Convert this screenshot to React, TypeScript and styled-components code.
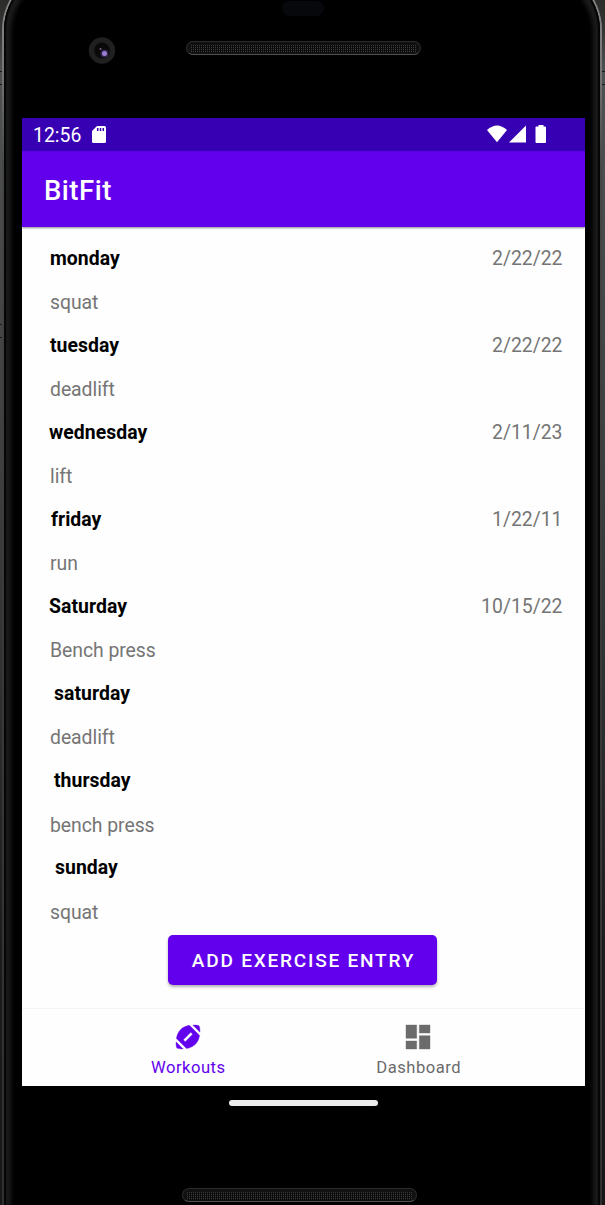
import React from "react";
import styled, { createGlobalStyle } from "styled-components";

const GlobalStyle = createGlobalStyle`
  * { box-sizing: border-box; }
  body { margin: 0; background: #000; overflow: hidden; }
`;

const Stage = styled.div`
  position: relative;
  width: 605px;
  height: 1205px;
  overflow: hidden;
  background: linear-gradient(#2c2c2a, #343432 30px, #505252 70px, #3c3e3d 500px, #1c1c1c 950px, #171717);
  font-family: Roboto, sans-serif;
`;

const Rim = styled.div`
  position: absolute;
  top: -32px;
  bottom: 0;
  left: 2px;
  right: 3px;
  padding: 2px 2px 0;
  border-radius: 62px 62px 0 0;
  background: linear-gradient(#8c8c8c 0, #777 100px, #454746 200px, #383938 700px, #303030);
`;

const Bezel = styled.div`
  width: 100%;
  height: 100%;
  border-radius: 60px 60px 0 0;
  background: #000;
  box-shadow: inset 2px 0 1px #050505, inset -2px 0 1px #050505,
    inset 7px 3px 4px #1b1b1b, inset -7px 3px 4px #1b1b1b;
`;

const SideKey = styled.div<{ $side: "left" | "right"; $top: number; $height: number }>`
  position: absolute;
  ${(p) => p.$side}: 0;
  top: ${(p) => p.$top}px;
  width: 4px;
  height: ${(p) => p.$height}px;
  border: solid #171717;
  border-width: 1px 0;
`;

const Device = styled.div`
  position: relative;
  height: 1205px;
  padding: 0 20px 0 22px;
  display: flex;
  flex-direction: column;
`;

const TopBezel = styled.div`
  position: relative;
  height: 118px;
  flex: none;
`;

const Notch = styled.div`
  position: absolute;
  left: 260px;
  top: 1px;
  width: 42px;
  height: 15px;
  border-radius: 8px;
  background: #07080c;
`;

const Camera = styled.svg`
  position: absolute;
  left: 66px;
  top: 36px;
`;

const Speaker = styled.div<{ $left: number; $top: number }>`
  position: absolute;
  left: ${(p) => p.$left}px;
  top: ${(p) => p.$top}px;
  width: 235px;
  height: 14px;
  border: 1px solid #2b2c2b;
  border-bottom-color: #505150;
  border-radius: 7px;
  background:
    repeating-linear-gradient(90deg, transparent 0 1px, #0b0b0b 1px 2px) 4px 3px / 225px 8px no-repeat,
    repeating-linear-gradient(#3a3a38 0 1px, #151515 1px 2px) 4px 3px / 225px 8px no-repeat,
    #101110;
`;

const Screen = styled.main`
  height: 968px;
  flex: none;
  display: flex;
  flex-direction: column;
  background: #fefefe;
`;

const StatusBar = styled.header`
  height: 33px;
  flex: none;
  display: flex;
  align-items: center;
  padding: 0 38px 0 11px;
  background: #3700b3;
  color: #fff;
`;

const Clock = styled.span`
  width: 59px;
  font-size: 19.4px;
  line-height: 33px;
  padding-top: 1px;
  white-space: nowrap;
`;

const StatusIcons = styled.div`
  margin-left: auto;
  display: flex;
`;

const AppBar = styled.div`
  position: relative;
  height: 76px;
  flex: none;
  padding: 2px 22px 0;
  background: #6200ee;
  color: #fff;
  font-size: 27.5px;
  font-weight: 500;
  letter-spacing: 0.5px;
  line-height: 76px;
  box-shadow: 0 1px 2px rgba(0, 0, 0, 0.45);
`;

const List = styled.section`
  height: 782px;
  flex: none;
  padding: 9px 22px 0 28px;
  display: flex;
  flex-direction: column;
`;

const Entry = styled.article`
  height: 87.1px;
  flex: none;
`;

const EntryHead = styled.div`
  height: 44px;
  display: flex;
  justify-content: space-between;
  align-items: center;
`;

const Day = styled.strong<{ $indent: number }>`
  margin-left: ${(p) => p.$indent}px;
  font-size: 19.4px;
  font-weight: 700;
  letter-spacing: 0.05px;
  color: #000;
`;

const EntryDate = styled.span`
  font-size: 19.4px;
  margin-right: 0.5px;
  color: #757575;
`;

const Exercise = styled.div`
  height: 43px;
  line-height: 45px;
  font-size: 19.4px;
  letter-spacing: -0.05px;
  color: #757575;
`;

const AddButton = styled.button`
  align-self: center;
  width: 269px;
  height: 50px;
  margin: 2px 0 0 -8px;
  padding: 1px 0 0 2px;
  border: 0;
  border-radius: 5px;
  background: #6200ee;
  color: #fff;
  font: 500 19.1px Roboto, sans-serif;
  letter-spacing: 1.75px;
  white-space: nowrap;
  box-shadow: 0 2px 3px rgba(0, 0, 0, 0.3);
`;

const BottomNav = styled.nav`
  height: 77px;
  display: flex;
  justify-content: center;
  background: #fefefe;
  box-shadow: 0 -1px 1px rgba(0, 0, 0, 0.04);
`;

const NavItem = styled.div<{ $active?: boolean }>`
  width: 230.5px;
  display: flex;
  flex-direction: column;
  align-items: center;
  padding-top: 12px;
  color: ${(p) => (p.$active ? "#6200ee" : "#6b6b6b")};
  font-size: 16.6px;
  letter-spacing: 0.5px;
  line-height: 24px;

  svg { margin: 0 1px 3px 0; }
`;

const BottomBezel = styled.div`
  position: relative;
  flex: 1;
`;

const HomeBar = styled.div`
  width: 149px;
  height: 6px;
  margin: 14px 0 0 207px;
  border-radius: 3px;
  background: #ededed;
`;

const entries = [
  { day: "monday", exercise: "squat", date: "2/22/22", indent: 0 },
  { day: "tuesday", exercise: "deadlift", date: "2/22/22", indent: 0 },
  { day: "wednesday", exercise: "lift", date: "2/11/23", indent: -1 },
  { day: "friday", exercise: "run", date: "1/22/11", indent: 1 },
  { day: "Saturday", exercise: "Bench press", date: "10/15/22", indent: -1 },
  { day: "saturday", exercise: "deadlift", date: "", indent: 4 },
  { day: "thursday", exercise: "bench press", date: "", indent: 4 },
  { day: "sunday", exercise: "squat", date: "", indent: 5 },
];

const SdCardIcon = () => (
  <svg width="14" height="18" viewBox="0 0 14 18">
    <path fill="#fff" d="M5 0h7.5Q14 0 14 1.5v14q0 1.5-1.5 1.5h-11Q0 17 0 15.500V5Z" />
    <path stroke="#3700b3" strokeWidth="1.5" d="M5.700 2v3M8.500 2v3M11.300 2v3" />
  </svg>
);

const SignalIcons = () => (
  <svg width="60" height="20" viewBox="0 0 60 20" fill="#fff">
    <path d="M0 5Q10-4 20 5L10 17.300Z" />
    <path d="M39 .5v17H22Z" />
    <path d="M51.500 0h5v1.500h1.500q1 0 1 1V17q0 1-1 1h-8.500q-1 0-1-1V2.500q0-1 1-1h2Z" />
  </svg>
);

const FootballIcon = () => (
  <svg width="32" height="32" viewBox="0 0 24 24" fill="currentColor" stroke="currentColor" strokeWidth=".25">
    <path d="M3.020 15.620c-.08 2.420.32 4.340.67 4.690s2.280.76 4.690.67l-5.360-5.360zM13.080 3.280c-2.330.42-4.790 1.340-6.620 3.180s-2.760 4.290-3.180 6.620l7.630 7.630c2.340-.41 4.790-1.340 6.620-3.180s2.760-4.290 3.180-6.620l-7.630-7.630zM9.900 15.500l-1.400-1.400 5.600-5.600 1.400 1.400-5.600 5.600zM20.980 8.380c.08-2.420-.32-4.340-.67-4.690s-2.280-.76-4.690-.67l5.360 5.360z" />
  </svg>
);

const DashboardIcon = () => (
  <svg width="32" height="32" viewBox="0 0 24 24" fill="currentColor" stroke="currentColor" strokeWidth=".3">
    <path d="M3 13h8V3H3v10zm0 8h8v-6H3v6zm10 0h8V11h-8v10zm0-18v6h8V3h-8z" />
  </svg>
);

export default function App() {
  return (
    <Stage>
      <GlobalStyle />
      <SideKey $side="left" $top={71} $height={14} />
      <SideKey $side="left" $top={324} $height={14} />
      <SideKey $side="right" $top={71} $height={14} />
      <SideKey $side="right" $top={1152} $height={14} />
      <Rim>
        <Bezel />
      </Rim>
      <Device>
        <TopBezel>
          <Notch />
          <Camera width="28" height="28" viewBox="0 0 28 28">
            <circle cx="14" cy="14.500" r="13.200" fill="#202020" />
            <circle cx="14" cy="14.500" r="8" fill="#090909" stroke="#171717" />
            <circle cx="16.500" cy="17.500" r="4" fill="#30264a" />
            <circle cx="16.500" cy="17.500" r="2.500" fill="#9b7ed4" />
            <circle cx="12.500" cy="13" r="1" fill="#74658c" />
          </Camera>
          <Speaker $left={164} $top={41} />
        </TopBezel>
        <Screen>
          <StatusBar>
            <Clock>12:56</Clock>
            <SdCardIcon />
            <StatusIcons>
              <SignalIcons />
            </StatusIcons>
          </StatusBar>
          <AppBar>BitFit</AppBar>
          <List>
            {entries.map((entry, i) => (
              <Entry key={i}>
                <EntryHead>
                  <Day $indent={entry.indent}>{entry.day}</Day>
                  <EntryDate>{entry.date}</EntryDate>
                </EntryHead>
                <Exercise>{entry.exercise}</Exercise>
              </Entry>
            ))}
            <AddButton>ADD EXERCISE ENTRY</AddButton>
          </List>
          <BottomNav>
            <NavItem $active>
              <FootballIcon />
              Workouts
            </NavItem>
            <NavItem>
              <DashboardIcon />
              Dashboard
            </NavItem>
          </BottomNav>
        </Screen>
        <BottomBezel>
          <HomeBar />
          <Speaker $left={160} $top={102} />
        </BottomBezel>
      </Device>
    </Stage>
  );
}
